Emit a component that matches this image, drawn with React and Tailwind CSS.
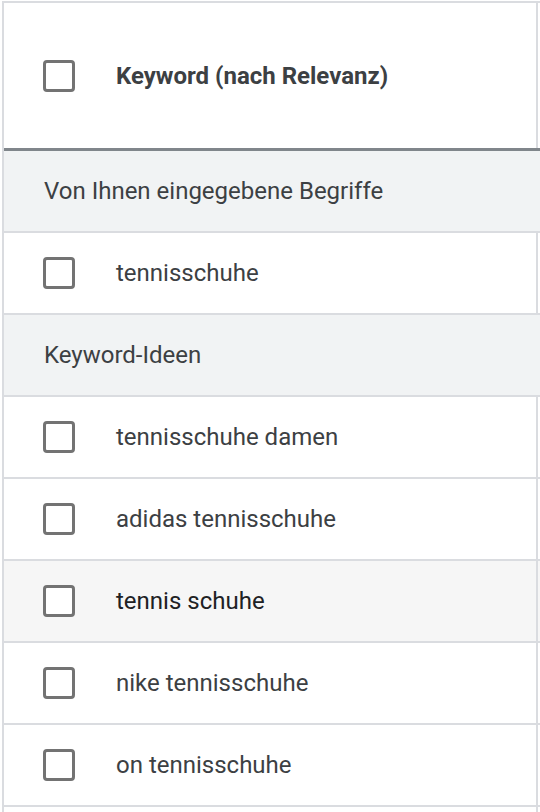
const rows = [
  { type: 'section', label: 'Von Ihnen eingegebene Begriffe' },
  { type: 'row', label: 'tennisschuhe' },
  { type: 'section', label: 'Keyword-Ideen' },
  { type: 'row', label: 'tennisschuhe damen' },
  { type: 'row', label: 'adidas tennisschuhe' },
  { type: 'row', label: 'tennis schuhe', hover: true },
  { type: 'row', label: 'nike tennisschuhe' },
  { type: 'row', label: 'on tennisschuhe' },
];

function Checkbox() {
  return (
    <span className="block w-[32px] h-[32px] shrink-0 rounded-[4px] border-[3px] border-[#737373] bg-white" />
  );
}

export default function App() {
  return (
    <div
      className="h-[812px] w-[540px] overflow-hidden bg-white"
      style={{ fontFamily: 'Roboto, "Noto Sans", Arial, sans-serif' }}
    >
      <div className="mt-[1px] ml-[2px] h-[811px] border-t-2 border-l-2 border-[#dadce0]">
        {/* header */}
        <div className="flex h-[148px] border-b-[3px] border-[#80868b]">
          <div className="flex w-[534px] shrink-0 items-center border-r-2 border-[#dadce0] pl-[39px]">
            <Checkbox />
            <span className="ml-[41px] text-[24px] font-bold text-[#3c4043]">Keyword (nach Relevanz)</span>
          </div>
          <div className="flex-1" />
        </div>

        {rows.map((r) =>
          r.type === 'section' ? (
            <div
              key={r.label}
              className="flex h-[82px] items-center border-b-2 border-[#dadce0] bg-[#f1f3f4] pl-[40px] text-[24px] text-[#3c4043]"
            >
              {r.label}
            </div>
          ) : (
            <div
              key={r.label}
              className={`flex h-[82px] border-b-2 border-[#dadce0] ${r.hover ? 'bg-[#f6f6f6]' : 'bg-white'}`}
            >
              <div className="flex w-[534px] shrink-0 items-center border-r-2 border-[#dadce0] pl-[39px]">
                <Checkbox />
                <span
                  className={`ml-[41px] text-[24px] ${r.hover ? 'text-[#202124]' : 'text-[#3c4043]'}`}
                >
                  {r.label}
                </span>
              </div>
              <div className="flex-1" />
            </div>
          )
        )}

        <div className="flex h-full">
          <div className="w-[534px] shrink-0 border-r-2 border-[#dadce0]" />
        </div>
      </div>
    </div>
  );
}
